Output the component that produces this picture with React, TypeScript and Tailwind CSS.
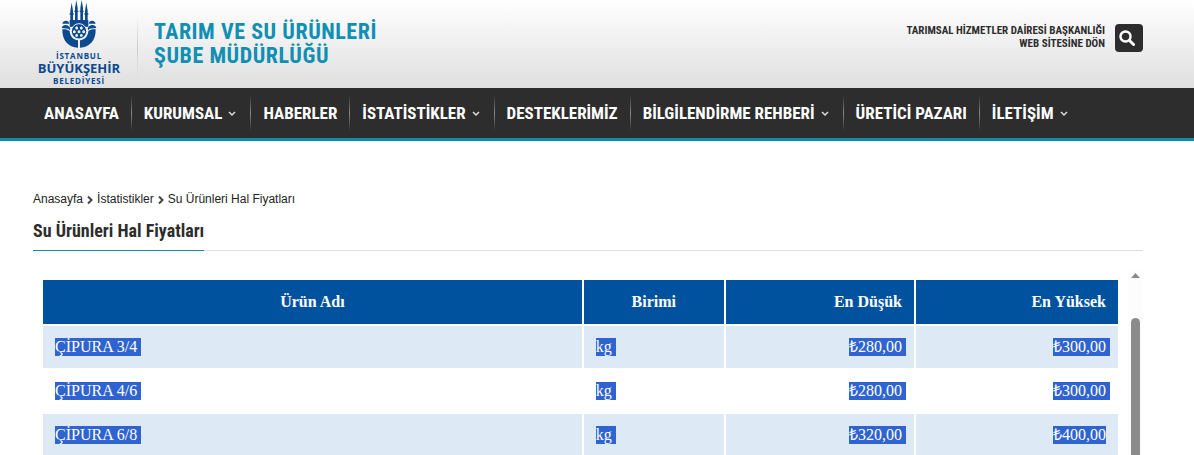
const condensed = "font-['Roboto_Condensed','Liberation_Sans_Narrow',Roboto,sans-serif]"

const menu = [
  { label: 'ANASAYFA', sub: false },
  { label: 'KURUMSAL', sub: true },
  { label: 'HABERLER', sub: false },
  { label: 'İSTATİSTİKLER', sub: true },
  { label: 'DESTEKLERİMİZ', sub: false },
  { label: 'BİLGİLENDİRME REHBERİ', sub: true },
  { label: 'ÜRETİCİ PAZARI', sub: false },
  { label: 'İLETİŞİM', sub: true },
]

const prices = [
  { name: 'ÇİPURA 3/4', unit: 'kg', min: '₺280,00', max: '₺300,00' },
  { name: 'ÇİPURA 4/6', unit: 'kg', min: '₺280,00', max: '₺300,00' },
  { name: 'ÇİPURA 6/8', unit: 'kg', min: '₺320,00', max: '₺400,00' },
]

function Emblem() {
  return (
    <svg viewBox="186 0 104 144" className="h-12 w-9" fill="#0b4a8f" aria-hidden="true">
      {/* minareler */}
      <path d="M230 0l4 24v56h-8V24z M246 0l4 24v56h-8V24z" />
      <path d="M216 8l4 24v48h-8V32z M260 8l4 24v48h-8V32z" />
      <path d="M210 40h12v4h-12z M254 40h12v4h-12z M224 32h12v4h-12z M240 32h12v4h-12z" />
      <path d="M210 60h56v20h-56z" />
      {/* kubbeler */}
      <path d="M188 71c1-6 6-9 11-9s9 3 10 9z M267 71c1-6 5-9 10-9s10 3 11 9z" />
      <path d="M186 84c1-6 6-9 12-9s12 4 14 11l-2 5-4-5z M290 84c-1-6-6-9-12-9s-12 4-14 11l2 5 4-5z" />
      <path d="M188 88c8-1 16 0 22 5 1 16 10 26 25 28v22c-29-1-48-21-47-55z" />
      <path d="M288 88c-8-1-16 0-22 5-1 16-10 26-25 28v22c29-1 48-21 47-55z" />
      {/* yedi tepe */}
      <circle cx="238" cy="94" r="23" stroke="#f1f1f1" strokeWidth="3" />
      <g fill="#f1f1f1">
        <path d="M231 79l4 3v5l-4 2-4-2v-5z M245 79l4 3v5l-4 2-4-2v-5z" />
        <path d="M224 90l4 3v5l-4 2-4-2v-5z M238 90l4 3v5l-4 2-4-2v-5z M252 90l4 3v5l-4 2-4-2v-5z" />
        <path d="M231 101l4 3v5l-4 2-4-2v-5z M245 101l4 3v5l-4 2-4-2v-5z" />
      </g>
    </svg>
  )
}

function Header() {
  return (
    <header className="flex h-22 shrink-0 items-start justify-between bg-linear-to-b from-white to-[#dfdfdf] pr-[51px] pl-[33px]">
      <div className="flex">
        <a href="#" className="flex w-[92px] flex-col items-center font-['Open_Sans',sans-serif] font-bold text-[#0b4a8f]">
          <Emblem />
          <span className="mt-[2px] text-[8px] leading-[11px] tracking-widest">İSTANBUL</span>
          <span className="text-[13px] leading-[14px]">BÜYÜKŞEHİR</span>
          <span className="text-[8px] leading-[11px] tracking-widest">BELEDİYESİ</span>
        </a>
        <div className="mt-4 ml-3 h-16 w-px bg-linear-to-b from-transparent via-[#cccccc] to-transparent" />
        <a href="#" className={`mt-5 ml-4 text-[22px] leading-6 font-bold tracking-wide text-[#0f8fb3] ${condensed}`}>
          TARIM VE SU ÜRÜNLERİ<br />ŞUBE MÜDÜRLÜĞÜ
        </a>
      </div>
      <div className="flex items-start gap-[10px] pt-6">
        <a href="#" className={`text-right text-[11px] leading-[13px] font-bold text-[#2d2d2d] ${condensed}`}>
          TARIMSAL HİZMETLER DAİRESİ BAŞKANLIĞI<br />WEB SİTESİNE DÖN
        </a>
        <button type="button" aria-label="Ara" className="flex h-7 w-7 items-center justify-center rounded bg-[#2d2d2d] pr-1 text-white">
          <svg viewBox="0 0 32 32" className="h-4 w-4 shrink-0" fill="none" stroke="currentColor" aria-hidden="true">
            <circle cx="13" cy="13" r="10" strokeWidth="5" />
            <path d="M21 21l8 8" strokeWidth="6" strokeLinecap="round" />
          </svg>
        </button>
      </div>
    </header>
  )
}

function Menu() {
  return (
    <nav className={`flex h-[53px] shrink-0 items-center border-b-3 border-[#118cad] bg-[#2d2d2d] pl-8 ${condensed}`}>
      {menu.map((item, i) => (
        <div key={item.label} className="flex items-center">
          {i > 0 && <div className="h-9 w-px bg-linear-to-b from-transparent via-[#888888] to-transparent" />}
          <a href="#" className="flex items-center gap-1 px-3 text-[17px] leading-6 font-bold whitespace-nowrap text-white">
            {item.label}
            {item.sub && (
              <svg viewBox="0 0 24 24" className="h-3 w-3" fill="none" stroke="#dddddd" strokeWidth="3" aria-hidden="true">
                <path d="M6 10l6 6 6-6" />
              </svg>
            )}
          </a>
        </div>
      ))}
    </nav>
  )
}

function Crumb() {
  return (
    <svg viewBox="0 0 16 16" className="mt-px h-2 w-2" fill="none" stroke="#444444" strokeWidth="4" aria-hidden="true">
      <path d="M4 1l7 7-7 7" />
    </svg>
  )
}

function Selected({ text, tail = true }: { text: string; tail?: boolean }) {
  return (
    <span className={tail ? '-mr-1 inline-block bg-[#2f63cf] pr-1 text-white' : 'inline-block bg-[#2f63cf] text-white'}>
      {text}
    </span>
  )
}

function PriceTable() {
  return (
    <table className="w-full table-fixed border-separate border-spacing-[2px] font-['Liberation_Serif',serif] text-[16px] leading-[18px]">
      <colgroup>
        <col className="w-[50.4%]" />
        <col className="w-[13.1%]" />
        <col className="w-[17.6%]" />
        <col className="w-[18.9%]" />
      </colgroup>
      <thead>
        <tr className="h-11 bg-[#00529f] text-white">
          <th className="px-3">Ürün Adı</th>
          <th className="px-3">Birimi</th>
          <th className="px-3 text-right">En Düşük</th>
          <th className="px-3 text-right">En Yüksek</th>
        </tr>
      </thead>
      <tbody>
        {prices.map((p, i) => (
          <tr key={p.name} className="odd:bg-[#dde9f5]">
            <td className="p-3"><Selected text={p.name} /></td>
            <td className="p-3"><Selected text={p.unit} /></td>
            <td className="p-3 text-right"><Selected text={p.min} /></td>
            <td className="p-3 text-right"><Selected text={p.max} tail={i < prices.length - 1} /></td>
          </tr>
        ))}
      </tbody>
    </table>
  )
}

export default function App() {
  return (
    <div className="flex h-screen flex-col overflow-hidden bg-white text-[#222222]">
      <Header />
      <Menu />
      <main className="flex min-h-0 flex-1 flex-col pt-12 pr-[51px] pl-[33px]">
        <div className="flex items-center gap-[3px] font-['Liberation_Sans',sans-serif] text-xs leading-5">
          <a href="#">Anasayfa</a>
          <Crumb />
          <a href="#">İstatistikler</a>
          <Crumb />
          <span>Su Ürünleri Hal Fiyatları</span>
        </div>
        <div className="mt-2 flex border-b border-[#dddddd]">
          <h1 className={`-mb-px border-b border-[#118cad] pt-[3px] pb-[9px] text-lg leading-[21px] font-bold text-[#2d2d2d] ${condensed}`}>
            Su Ürünleri Hal Fiyatları
          </h1>
        </div>
        <div className="mt-[17px] flex min-h-0 flex-1">
          <div className="min-w-0 flex-1 overflow-hidden pt-[10px] pr-2 pl-2">
            <PriceTable />
          </div>
          <div className="flex w-[15px] flex-col items-center bg-[#fdfdfd] pt-[5px]">
            <svg viewBox="0 0 18 10" className="h-[5px] w-[9px] shrink-0" fill="#8b8b8b" aria-hidden="true">
              <path d="M9 0l9 10H0z" />
            </svg>
            <div className="mt-10 w-[9px] flex-1 rounded-t-full bg-[#8b8b8b]" />
          </div>
        </div>
      </main>
    </div>
  )
}
